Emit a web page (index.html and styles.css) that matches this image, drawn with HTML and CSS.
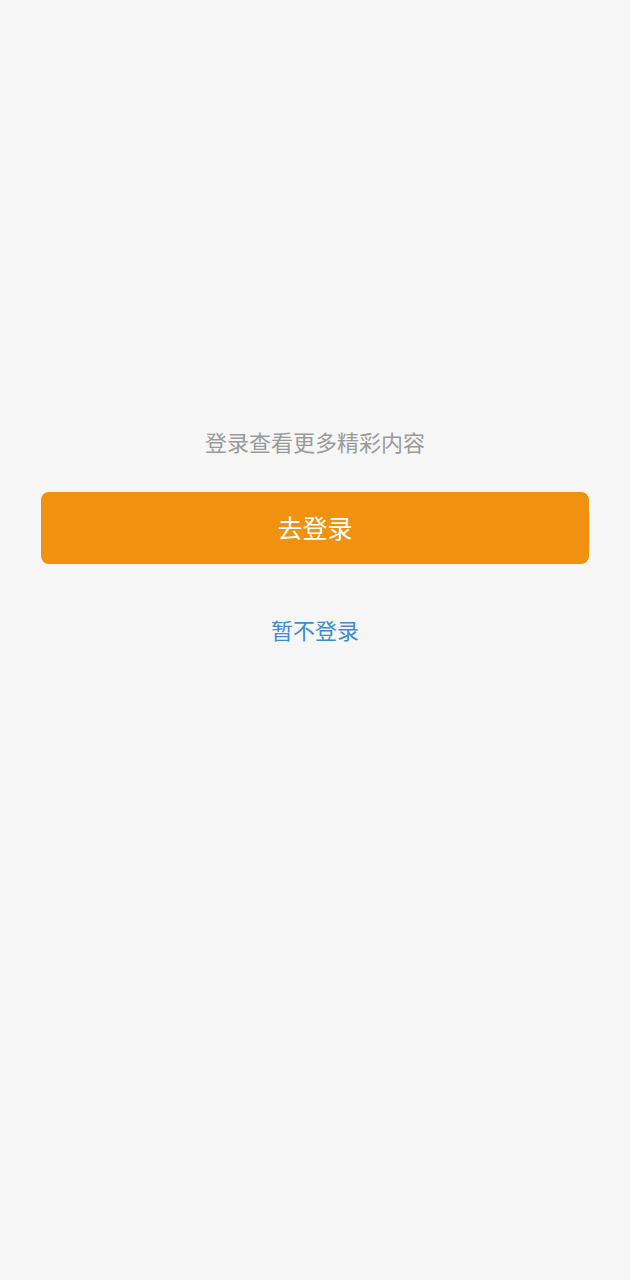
FILE: index.html
```html
<!DOCTYPE html>
<html lang="zh-CN">
<head>
<meta charset="utf-8">
<title>登录</title>
<link rel="stylesheet" href="styles.css">
</head>
<body>
<main class="login-prompt">
  <p class="hint">登录查看更多精彩内容</p>
  <button class="btn-login" type="button">去登录</button>
  <a class="skip" href="#">暂不登录</a>
</main>
</body>
</html>
```

FILE: styles.css
```css
html, body {
  margin: 0;
  padding: 0;
  background: #f6f6f6;
  height: 100%;
}
body {
  font-family: "Noto Sans CJK SC", "Noto Sans", sans-serif;
}
.login-prompt {
  display: flex;
  flex-direction: column;
  align-items: stretch;
  padding: 426px 41px 0;
}
.hint {
  margin: 0;
  font-size: 22px;
  line-height: 30px;
  color: #9a9a9a;
  text-align: center;
}
.btn-login {
  margin-top: 36px;
  height: 72px;
  border: none;
  border-radius: 8px;
  background: #f19110;
  color: #fff;
  font-family: inherit;
  font-size: 25px;
  padding: 0 0 2px;
}
.skip {
  align-self: center;
  margin-top: 50px;
  font-size: 22px;
  line-height: 30px;
  color: #3f8bd3;
  text-decoration: none;
}
```
